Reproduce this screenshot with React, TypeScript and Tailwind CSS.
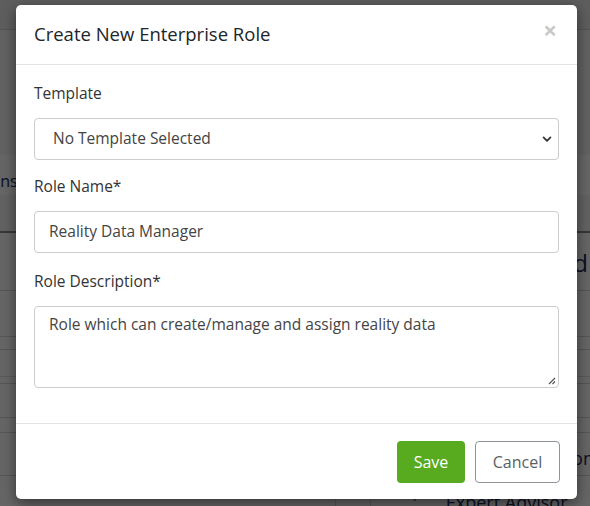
import React from "react";

function Backdrop() {
  return (
    <div className="absolute inset-0 flex flex-col bg-[#f4f5f7] text-[#1b2b5c]">
      <div className="h-[30px] border-b border-[#d0d0d0] bg-[#ececec]" />
      <div className="h-[127px] bg-[#f6f6f6]" />
      <div className="h-[40px] bg-white pt-[14px] text-[16px] leading-[24px]">
        <span className="-ml-[36px]">Plugins</span>
      </div>
      <div className="h-[38px] border-b-2 border-[#8a8a8a] bg-[#f6f6f6]" />
      <div className="flex h-[59px] items-center justify-end border-b border-[#d6d6d6] bg-white pt-[4px] text-[24px]">
        <span className="pr-[2px]">Field</span>
      </div>
      <div className="h-[47px] border-b border-[#d6d6d6] bg-white" />
      <div className="h-[13px] border-b border-[#d6d6d6] bg-white" />
      <div className="h-[27px] border-b border-[#e2e2e2] bg-white" />
      <div className="h-[7px] border-b border-[#d6d6d6] bg-white" />
      <div className="h-[34px] border-b border-[#d6d6d6] bg-white" />
      <div className="h-[16px] border-b border-[#d6d6d6] bg-white" />
      <div className="flex h-[43px] items-center justify-end border-b border-[#d6d6d6] bg-white pt-[8px] text-[18px]">
        <span className="-mr-[4px]">Common</span>
      </div>
      <div className="flex h-[30px] bg-white text-[18px]">
        <div className="ml-[335px] h-full border-l border-[#d6d6d6]" />
        <div className="ml-[34px] h-full border-l border-[#d6d6d6]" />
        <span className="ml-[42px] mt-[12px] text-[16px] leading-none">›</span>
        <span className="ml-[28px] mt-[17px] leading-none">Expert Advisor</span>
      </div>
    </div>
  );
}

export default function App() {
  return (
    <div
      className="relative h-[506px] w-[590px] overflow-hidden"
      style={{ fontFamily: '"Open Sans", "Noto Sans", sans-serif' }}
    >
      <Backdrop />
      <div className="absolute inset-0 bg-black/60" />
      <div className="absolute inset-0 flex justify-center pt-[5px]">
        <div className="ml-[3px] h-[494px] w-[561px] rounded-[5px] bg-white shadow-[0_4px_14px_rgba(0,0,0,0.5)]">
          <div className="flex h-[60px] items-center justify-between border-b border-[#e3e3e3] pl-[18px] pr-[20px]">
            <h5 className="-mt-[1px] text-[18.5px] font-medium leading-[24px] text-[#212529]">
              Create New Enterprise Role
            </h5>
            <span className="-mt-[10px] text-[24px] font-bold leading-none text-[#c8c8c8]">×</span>
          </div>
          <div className="px-[18px] pb-[18px] pt-[16px] text-[15.5px]">
            <div className="mb-[14px]">
              <label className="mb-[13px] block leading-[24px] text-[#333]">Template</label>
              <div className="relative flex h-[42px] items-center rounded-[4px] border border-[#ccc] pl-[18px] text-[#444]">
                No Template Selected
                <svg className="absolute right-[6px] top-[15px]" width="10" height="10" viewBox="0 0 16 16">
                  <path d="M2.5 5.5 L8 11 L13.5 5.5" fill="none" stroke="#333" strokeWidth="2.8" strokeLinecap="round" strokeLinejoin="round" />
                </svg>
              </div>
            </div>
            <div className="mb-[16px]">
              <label className="mb-[13px] block leading-[24px] text-[#333]">Role Name*</label>
              <div className="flex h-[42px] items-center rounded-[4px] border border-[#ccc] pl-[14px] text-[#444]">
                Reality Data Manager
              </div>
            </div>
            <div className="mb-[17px]">
              <label className="mb-[13px] block leading-[24px] text-[#333]">Role Description*</label>
              <div className="relative h-[82px] rounded-[4px] border border-[#ccc] pl-[14px] pt-[5px] leading-[24px] text-[#444]">
                Role which can create/manage and assign reality data
                <svg className="absolute bottom-[2px] right-[2px]" width="9" height="9" viewBox="0 0 9 9">
                  <path d="M8 2 L2 8 M8 5.5 L5.5 8" stroke="#555" strokeWidth="1.2" />
                </svg>
              </div>
            </div>
          </div>
          <div className="flex items-center justify-end gap-[10px] border-t border-[#e3e3e3] px-[17px] pt-[17px]">
            <button className="h-[42px] w-[68px] rounded-[4px] bg-[#58aa1f] text-[16px] text-white">Save</button>
            <button className="h-[42px] w-[85px] rounded-[4px] border border-[#8e949a] bg-white text-[16px] text-[#5a5f64]">Cancel</button>
          </div>
        </div>
      </div>
    </div>
  );
}
